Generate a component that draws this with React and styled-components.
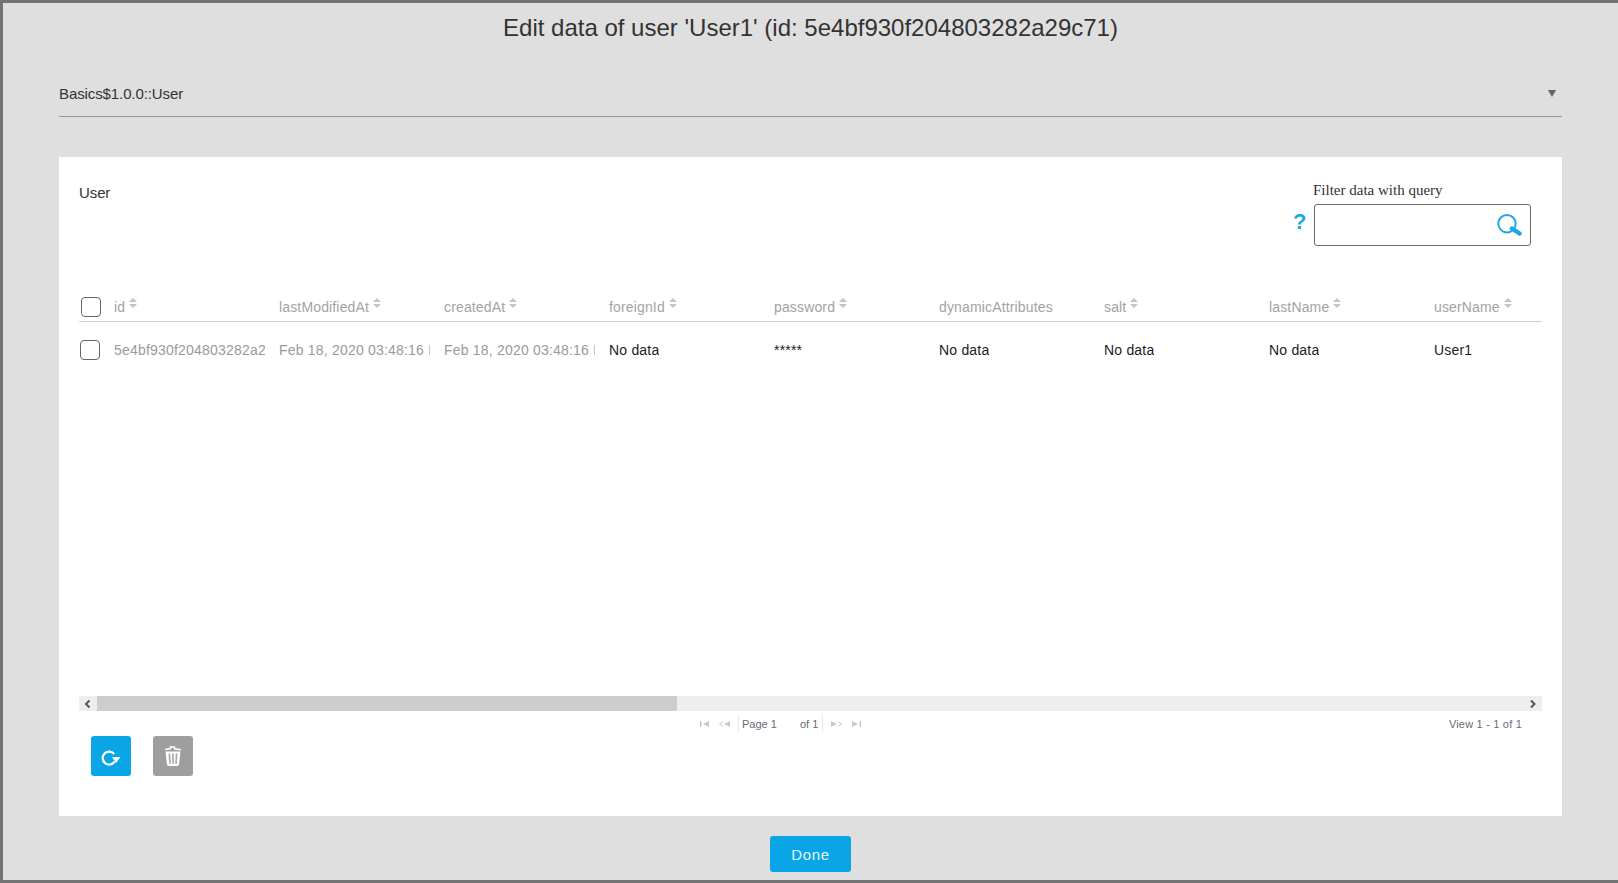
import React from 'react';
import styled, { createGlobalStyle } from 'styled-components';

const GlobalStyle = createGlobalStyle`
  html, body { margin: 0; padding: 0; height: 100%; background: #dfdfdf; }
  body { font-family: "Liberation Sans", Arial, sans-serif; font-size: 14px; color: #333; }
`;

const columns = [
  { name: 'id', value: '5e4bf930f204803282a29c71', muted: true },
  { name: 'lastModifiedAt', value: 'Feb 18, 2020 03:48:16 PM', muted: true },
  { name: 'createdAt', value: 'Feb 18, 2020 03:48:16 PM', muted: true },
  { name: 'foreignId', value: 'No data' },
  { name: 'password', value: '*****' },
  { name: 'dynamicAttributes', value: 'No data', unsortable: true },
  { name: 'salt', value: 'No data' },
  { name: 'lastName', value: 'No data' },
  { name: 'userName', value: 'User1' },
];

const Page = styled.div`
  box-sizing: border-box;
  height: 883px;
  overflow: hidden;
  display: flex;
  flex-direction: column;
  padding: 0 56px 0 56px;
  background: #dfdfdf;
  border-top: 3px solid #737373;
  border-left: 3px solid #737373;
  border-bottom: 3px solid #737373;
`;
const Title = styled.h1`
  margin: 0;
  height: 50px;
  line-height: 50px;
  text-align: center;
  font-size: 24px;
  font-weight: 400;
  color: #333;
`;
const SelectBar = styled.div`
  box-sizing: border-box;
  height: 64px;
  padding: 18px 6px 0 0;
  display: flex;
  align-items: center;
  justify-content: space-between;
  border-bottom: 1px solid #999;
  color: #333;
  font-size: 15px;
  letter-spacing: -0.1px;
`;
const Caret = styled.span`
  width: 0;
  height: 0;
  border-left: 4px solid transparent;
  border-right: 4px solid transparent;
  border-top: 7px solid #666;
`;
const Panel = styled.section`
  margin-top: 40px;
  height: 659px;
  background: #fff;
  display: flex;
  flex-direction: column;
  padding: 0 20px;
`;
const TopRow = styled.div`
  height: 135px;
  display: flex;
  justify-content: space-between;
`;
const GridTitle = styled.div`
  margin-top: 28px;
  color: #333;
  font-size: 15px;
  letter-spacing: -0.1px;
  line-height: 16px;
`;
const FilterBlock = styled.div`
  margin-right: 11px;
  padding-top: 23px;
  display: flex;
  flex-direction: column;
`;
const FilterLabel = styled.label`
  font-family: "Liberation Serif", "Times New Roman", serif;
  font-size: 15px;
  line-height: 20px;
  color: #333;
  margin-left: -1px;
  height: 24px;
`;
const FilterRow = styled.div`
  position: relative;
`;
const Help = styled.span`
  position: absolute;
  left: -21px;
  top: 3px;
  color: #1ca7e6;
  font-size: 22px;
  font-weight: 700;
  line-height: 30px;
`;
const SearchBox = styled.div`
  box-sizing: border-box;
  width: 217px;
  height: 42px;
  border: 1px solid #6b6b6b;
  border-radius: 3px;
  display: flex;
  align-items: center;
  justify-content: flex-end;
  padding-right: 8px;
`;
const HeaderRow = styled.div`
  height: 29px;
  display: flex;
  align-items: center;
  overflow: hidden;
  border-bottom: 1px solid #d0d0d0;
`;
const Row = styled.div`
  height: 56px;
  display: flex;
  align-items: center;
  overflow: hidden;
`;
const Body = styled.div`
  height: 374px;
`;
const CheckCell = styled.div`
  flex: 0 0 30px;
  display: flex;
  padding-left: ${p => p.$inset}px;
  box-sizing: border-box;
`;
const Check = styled.input`
  appearance: none;
  margin: 0;
  width: 20px;
  height: 20px;
  box-sizing: border-box;
  border: 1px solid #666;
  border-radius: 4px;
  background: #fff;
`;
const Cell = styled.div`
  flex: 0 0 165px;
  box-sizing: border-box;
  padding: 0 9px 0 5px;
  display: flex;
  white-space: nowrap;
  overflow: hidden;
  letter-spacing: 0.2px;
  color: ${p => (p.$muted ? '#9a9a9a' : '#1c1c1c')};
`;
const CellText = styled.span`
  overflow: hidden;
  white-space: nowrap;
`;
const HeadCell = styled.div`
  flex: 0 0 165px;
  box-sizing: border-box;
  padding-left: 5px;
  display: flex;
  align-items: center;
  gap: 4px;
  color: #a3a3a3;
  letter-spacing: 0.15px;
  white-space: nowrap;
`;
const Sort = styled.span`
  display: inline-flex;
  flex-direction: column;
  gap: 2px;
  margin-top: -7px;
  &::before, &::after {
    content: '';
    width: 0;
    height: 0;
    border-left: 4px solid transparent;
    border-right: 4px solid transparent;
  }
  &::before { border-bottom: 4px solid #c4c4c4; }
  &::after { border-top: 4px solid #c4c4c4; }
`;
const ScrollBar = styled.div`
  height: 15px;
  background: #eee;
  display: flex;
  align-items: center;
  justify-content: space-between;
  position: relative;
`;
const ScrollArrow = styled.span`
  flex: 0 0 18px;
  display: flex;
  align-items: center;
  justify-content: center;
`;
const ScrollThumb = styled.div`
  position: absolute;
  left: 18px;
  top: 0;
  bottom: 0;
  width: ${p => p.$width}px;
  background: #cdcdcd;
`;
const PagerRow = styled.div`
  height: 25px;
  display: flex;
  align-items: center;
  padding-left: 621px;
  padding-right: 20px;
  font-size: 11px;
  color: #6a6a78;
`;
const PagerIcon = styled.svg`
  display: block;
  margin-right: ${p => p.$gap || 0}px;
`;
const PagerSep = styled.span`
  width: 1px;
  height: 17px;
  background: #e6e6e6;
  margin: 0 ${p => p.$right}px 0 ${p => p.$left}px;
`;
const PageLabel = styled.span`
  width: ${p => p.$width}px;
`;
const ViewLabel = styled.span`
  margin-left: auto;
  letter-spacing: 0.2px;
`;
const Actions = styled.div`
  display: flex;
  gap: 22px;
  padding-left: 12px;
`;
const IconButton = styled.button`
  width: 40px;
  height: 40px;
  border: 0;
  padding: 0;
  border-radius: 3px;
  background: ${p => p.$bg};
  display: flex;
  align-items: center;
  justify-content: center;
`;
const Footer = styled.div`
  display: flex;
  justify-content: center;
  margin-top: 20px;
`;
const DoneButton = styled.button`
  width: 81px;
  height: 36px;
  border: 0;
  border-radius: 3px;
  background: #0aa5e6;
  color: #e8f7ff;
  font-family: inherit;
  font-size: 15px;
  letter-spacing: 0.6px;
`;

const SearchIcon = () => (
  <svg width="26" height="22" viewBox="0 0 26 22" fill="none">
    <circle cx="11" cy="9.7" r="8.7" stroke="#1ca7e6" strokeWidth="2" />
    <path d="M16 14.5 L23.5 19.5" stroke="#1ca7e6" strokeWidth="4.5" strokeLinecap="round" />
  </svg>
);

const RefreshIcon = () => (
  <svg width="20" height="20" viewBox="0 0 20 20" fill="none">
    <path d="M13.6 15.6 A6.5 6.5 0 1 1 13.2 8" stroke="#fff" strokeWidth="2.2" />
    <path d="M11 11 H19.5 L15 17 Z" fill="#fff" />
  </svg>
);

const TrashIcon = () => (
  <svg width="18" height="20" viewBox="0 0 18 20" fill="none">
    <path d="M1.2 3.6 L6.5 2.6 V1 H10.5 V2.8 L16.8 3.8" stroke="#fff" strokeWidth="1.5" />
    <path d="M1.5 5.5 H16.5 L15 18.6 Q14.9 20 13.5 20 H4.5 Q3.1 20 3 18.6 Z" fill="#fff" />
    <path d="M5.4 7.5 L6 17.8 M9 7.5 V17.8 M12.6 7.5 L12 17.8" stroke="#a8a8a8" strokeWidth="1.7" />
  </svg>
);

const ChevronIcon = ({ dir }) => (
  <svg width="8" height="10" viewBox="0 0 8 10" fill="none">
    <path d={dir === 'left' ? 'M5.5 1.5 L2 5 L5.5 8.5' : 'M2 1.5 L5.5 5 L2 8.5'} stroke="#555" strokeWidth="2" />
  </svg>
);

const pagerPaths = {
  first: 'M0 1 H1.5 V7 H0 Z M9 1 V7 L3 4 Z',
  prev: 'M4 1 L0 4 L4 7 L4 6 L1.5 4 L4 2 Z M11 1 V7 L5 4 Z',
  next: 'M0 1 V7 L6 4 Z M7 1 L11 4 L7 7 L7 6 L9.5 4 L7 2 Z',
  last: 'M0 1 V7 L6 4 Z M7.5 1 H9 V7 H7.5 Z',
};

const PagerGlyph = ({ kind, width, gap }) => (
  <PagerIcon width={width} height="8" viewBox={`0 0 ${width} 8`} $gap={gap}>
    <path d={pagerPaths[kind]} fill="#c9c9c9" />
  </PagerIcon>
);

export default function App() {
  return (
    <>
      <GlobalStyle />
      <Page>
        <Title>Edit data of user 'User1' (id: 5e4bf930f204803282a29c71)</Title>
        <SelectBar>
          <span>Basics$1.0.0::User</span>
          <Caret />
        </SelectBar>
        <Panel>
          <TopRow>
            <GridTitle>User</GridTitle>
            <FilterBlock>
              <FilterLabel>Filter data with query</FilterLabel>
              <FilterRow>
                <Help>?</Help>
                <SearchBox>
                  <SearchIcon />
                </SearchBox>
              </FilterRow>
            </FilterBlock>
          </TopRow>
          <HeaderRow>
            <CheckCell $inset={2}>
              <Check type="checkbox" />
            </CheckCell>
            {columns.map(c => (
              <HeadCell key={c.name}>
                {c.name}
                {!c.unsortable && <Sort />}
              </HeadCell>
            ))}
          </HeaderRow>
          <Body>
            <Row>
              <CheckCell $inset={1}>
                <Check type="checkbox" />
              </CheckCell>
              {columns.map(c => (
                <Cell key={c.name} $muted={c.muted}>
                  <CellText>{c.value}</CellText>
                </Cell>
              ))}
            </Row>
          </Body>
          <ScrollBar>
            <ScrollArrow><ChevronIcon dir="left" /></ScrollArrow>
            <ScrollThumb $width={580} />
            <ScrollArrow><ChevronIcon dir="right" /></ScrollArrow>
          </ScrollBar>
          <PagerRow>
            <PagerGlyph kind="first" width={10} gap={9} />
            <PagerGlyph kind="prev" width={12} />
            <PagerSep $left={7} $right={3} />
            <PageLabel $width={58}>Page 1</PageLabel>
            <span>of 1</span>
            <PagerSep $left={4} $right={8} />
            <PagerGlyph kind="next" width={12} gap={9} />
            <PagerGlyph kind="last" width={10} />
            <ViewLabel>View 1 - 1 of 1</ViewLabel>
          </PagerRow>
          <Actions>
            <IconButton $bg="#0aa5e6"><RefreshIcon /></IconButton>
            <IconButton $bg="#9e9e9e"><TrashIcon /></IconButton>
          </Actions>
        </Panel>
        <Footer>
          <DoneButton>Done</DoneButton>
        </Footer>
      </Page>
    </>
  );
}
